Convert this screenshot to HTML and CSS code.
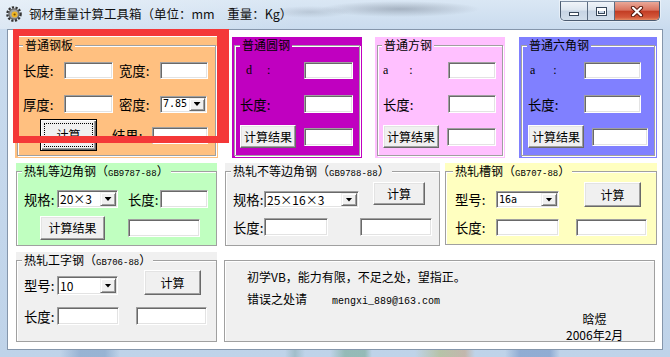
FILE: index.html
```html
<!DOCTYPE html>
<html lang="zh-CN">
<head>
<meta charset="utf-8">
<title>钢材重量计算工具箱</title>
<link rel="stylesheet" href="styles.css">
</head>
<body>
<div class="window">
  <div class="titlebar">
    <svg class="appicon" viewBox="0 0 16 16" aria-hidden="true">
      <circle cx="8" cy="8" r="6.6" fill="none" stroke="#333" stroke-width="2.4" stroke-dasharray="2.2 1.4"/>
      <circle cx="8" cy="8" r="5.7" fill="#666"/>
      <circle cx="8" cy="8" r="4.5" fill="#a3a3a3"/>
      <circle cx="8.6" cy="8.5" r="3" fill="#f0b626"/>
      <circle cx="8.6" cy="8.5" r="1.1" fill="#7a5200"/>
    </svg>
    <div class="title">钢材重量计算工具箱（单位：mm　重量：Kg）</div>
    <div class="capbtns">
      <div class="cb cb-min"><span class="glyph-min"></span></div>
      <div class="cb cb-max"><span class="glyph-max"></span></div>
      <div class="cb cb-close">
        <svg width="14" height="11" viewBox="0 0 14 11" aria-hidden="true">
          <path d="M3 1.8 L11 9.2 M11 1.8 L3 9.2" stroke="#5a1c10" stroke-width="4.2" stroke-linecap="round"/>
          <path d="M3 1.8 L11 9.2 M11 1.8 L3 9.2" stroke="#fff" stroke-width="2.2" stroke-linecap="round"/>
        </svg>
      </div>
    </div>
  </div>

  <div class="client">
    <div class="row row1">
      <div class="group inset plate">
        <div class="frame">
          <div class="cap">普通钢板</div>
          <div class="ln mt9 h17">
            <span class="lbl ml5 w41">长度:</span><span class="tb w49 h17"></span>
            <span class="lbl ml6 w41">宽度:</span><span class="tb w48 h17"></span>
          </div>
          <div class="ln mt16 h18">
            <span class="lbl ml5 w41">厚度:</span><span class="tb w49 h18"></span>
            <span class="lbl ml6 w41">密度:</span>
            <span class="combo w47 h17"><span class="val mono">7.85</span><span class="drop"></span></span>
          </div>
          <div class="ln mt6 h32">
            <span class="btn dflt ml22 w57 h32"><span class="focus">计算</span></span>
            <span class="lbl ml15 w40">结果:</span><span class="tb w56 h17"></span>
          </div>
        </div>
      </div>

      <div class="group inset round">
        <div class="frame">
          <div class="cap">普通圆钢</div>
          <div class="ln mt9 h17">
            <span class="lbl latin ml11 w58">d     :</span><span class="tb w49 h17"></span>
          </div>
          <div class="ln mt16 h18">
            <span class="lbl ml5 w64">长度:</span><span class="tb w49 h18"></span>
          </div>
          <div class="ln mt12 h23">
            <span class="btn ml5 w56 h23">计算结果</span><span class="tb ml8 w49 h18"></span>
          </div>
        </div>
      </div>

      <div class="group inset square">
        <div class="frame">
          <div class="cap">普通方钢</div>
          <div class="ln mt9 h17">
            <span class="lbl latin ml5 w65">a       :</span><span class="tb w48 h17"></span>
          </div>
          <div class="ln mt16 h18">
            <span class="lbl ml5 w65">长度:</span><span class="tb w48 h18"></span>
          </div>
          <div class="ln mt12 h23">
            <span class="btn ml5 w56 h23">计算结果</span><span class="tb ml8 w49 h18"></span>
          </div>
        </div>
      </div>

      <div class="group inset hex">
        <div class="frame">
          <div class="cap">普通六角钢</div>
          <div class="ln mt9 h17">
            <span class="lbl latin ml8 w54">a      :</span><span class="tb w57 h17"></span>
          </div>
          <div class="ln mt16 h18">
            <span class="lbl ml6 w56">长度:</span><span class="tb w57 h18"></span>
          </div>
          <div class="ln mt12 h23">
            <span class="btn ml6 w56 h23">计算结果</span><span class="tb ml8 w56 h18"></span>
          </div>
        </div>
      </div>
    </div>

    <div class="row row2">
      <div class="group angle">
        <div class="frame">
          <div class="cap">热轧等边角钢（<span class="code">GB9787-88</span>）</div>
          <div class="ln mt11 h18">
            <span class="lbl ml7 w33">规格:</span>
            <span class="combo w61 h18"><span class="val">20×3</span><span class="drop"></span></span>
            <span class="lbl ml10 w32">长度:</span><span class="tb w48 h18"></span>
          </div>
          <div class="ln mt8 h24">
            <span class="btn ml23 w65 h24">计算结果</span><span class="tb ml23 w72 h18"></span>
          </div>
        </div>
      </div>

      <div class="group uangle">
        <div class="frame">
          <div class="cap">热轧不等边角钢（<span class="code">GB9788-88</span>）</div>
          <div class="ln top mt3 h26">
            <span class="lbl ml7 w31 mt9 h17">规格:</span>
            <span class="combo w95 h17 mt9"><span class="val">25×16×3</span><span class="drop"></span></span>
            <span class="btn ml14 w52 h23">计算</span>
          </div>
          <div class="ln mt10 h18">
            <span class="lbl ml7 w31">长度:</span><span class="tb w64 h18"></span>
            <span class="tb ml32 w72 h18"></span>
          </div>
        </div>
      </div>

      <div class="group channel">
        <div class="frame">
          <div class="cap">热轧槽钢（<span class="code">GB707-88</span>）</div>
          <div class="ln top mt3 h26">
            <span class="lbl ml9 w41 mt9 h17">型号:</span>
            <span class="combo w63 h17 mt9"><span class="val mono">16a</span><span class="drop"></span></span>
            <span class="btn ml25 w57 h25">计算</span>
          </div>
          <div class="ln mt11 h17">
            <span class="lbl ml9 w41">长度:</span><span class="tb w63 h17"></span>
            <span class="tb ml17 w71 h17"></span>
          </div>
        </div>
      </div>
    </div>

    <div class="row row3">
      <div class="group ibeam">
        <div class="frame">
          <div class="cap">热轧工字钢（<span class="code">GB706-88</span>）</div>
          <div class="ln top mt2 h25">
            <span class="lbl ml7 w33 mt6 h19">型号:</span>
            <span class="combo w61 h19 mt6"><span class="val">10</span><span class="drop"></span></span>
            <span class="btn ml26 w57 h25">计算</span>
          </div>
          <div class="ln mt12 h18">
            <span class="lbl ml7 w33">长度:</span><span class="tb w62 h18"></span>
            <span class="tb ml17 w71 h18"></span>
          </div>
        </div>
      </div>

      <div class="note">
        <div>初学VB，能力有限，不足之处，望指正。</div>
        <div class="note-l2"><span>错误之处请</span><span class="mail">mengxi_889@163.com</span></div>
        <div class="sig">
          <div>晗煜</div>
          <div>2006年2月</div>
        </div>
      </div>
    </div>

    <div class="highlight"></div>
  </div>
  <div class="frame-bottom"></div>
</div>
</body>
</html>
```

FILE: styles.css
```css
* { box-sizing: border-box; }
html, body { margin: 0; padding: 0; }
body {
  width: 670px;
  height: 357px;
  overflow: hidden;
  font-family: "Noto Sans CJK SC", "Noto Sans", sans-serif;
  color: #000;
  background: #c3d6ea;
}

.window {
  width: 670px;
  height: 357px;
  display: flex;
  flex-direction: column;
  background: linear-gradient(180deg, #dae7f4 0, #c9dbee 30px, #bfd3e9 100%);
}

/* ---------- title bar ---------- */
.titlebar {
  flex: none;
  height: 29px;
  display: flex;
  align-items: flex-start;
  padding-left: 6px;
  background:
    radial-gradient(ellipse 80px 8px at 400px 9px, rgba(70, 80, 95, .33), rgba(70, 80, 95, 0) 100%),
    radial-gradient(ellipse 40px 6px at 310px 12px, rgba(70, 80, 95, .18), rgba(70, 80, 95, 0) 100%),
    linear-gradient(90deg, rgba(255, 255, 255, .35), rgba(255, 255, 255, 0) 45%);
}
.appicon { flex: none; width: 16px; height: 16px; margin-top: 6px; }
.title {
  margin-left: 7px;
  margin-top: 5px;
  font-size: 12.5px;
  line-height: 17px;
  color: #111;
  white-space: nowrap;
}
.capbtns {
  margin-left: auto;
  margin-right: 10px;
  margin-top: 1px;
  display: flex;
  height: 20px;
  border: 1px solid #4b5b70;
  border-top-color: #7e8ea3;
  border-radius: 0 0 5px 5px;
  overflow: hidden;
  box-shadow: 0 0 0 1px rgba(255, 255, 255, .45);
}
.cb { display: flex; align-items: center; justify-content: center; height: 100%; }
.cb-min, .cb-max {
  width: 27px;
  border-right: 1px solid #5b6b80;
  background: linear-gradient(180deg, #f0f4f9 0, #dde6f0 45%, #c7d4e4 50%, #d2deeb 100%);
}
.cb-close {
  width: 44px;
  background: linear-gradient(180deg, #eaa898 0, #d9735f 45%, #c33d24 52%, #d4583b 85%, #e38a63 100%);
}
.glyph-min {
  width: 10px;
  height: 4px;
  margin-top: 6px;
  background: #fff;
  border: 1px solid #38475a;
}
.glyph-max {
  width: 11px;
  height: 9px;
  border: 1px solid #38475a;
  box-shadow: inset 0 0 0 1px #fff, inset 0 2px 0 1px #fff, inset 0 0 0 2px #38475a;
}

/* ---------- client area ---------- */
.client {
  position: relative;
  flex: none;
  height: 321px;
  margin: 0 7px;
  border: 1px solid #8596ab;
  background: #fff;
  padding-top: 7px;
  display: flex;
  flex-direction: column;
}
.row { flex: none; display: flex; align-items: flex-start; }
.row1 { height: 121px; }
.row2 { height: 83px; margin-top: 5px; }
.row3 { height: 90px; margin-top: 6px; }

.group {
  flex: none;
  height: 100%;
  display: flex;
  flex-direction: column;
  background: var(--bg);
}
.inset { padding: 0 2px 2px; }

.plate   { --bg: #ffc080; margin-left: 7px;  width: 203px; }
.round   { --bg: #c000c0; margin-left: 14px; width: 130px; }
.square  { --bg: #ffc0ff; margin-left: 13px; width: 130px; }
.hex     { --bg: #8080ff; margin-left: 14px; width: 138px; }
.angle   { --bg: #c0ffc0; margin-left: 8px;  width: 201px; }
.uangle  { --bg: #f0f0f0; margin-left: 8px;  width: 215px; }
.channel { --bg: #ffffc0; margin-left: 5px;  width: 212px; height: 82px; }
.ibeam   { --bg: #f0f0f0; margin-left: 8px;  width: 201px; }

.frame {
  flex: 1;
  min-height: 0;
  margin-top: 8px;
  border: 1px solid #a0a0a0;
  box-shadow: inset 1px 1px 0 #fff, 1px 1px 0 #fff;
  display: flex;
  flex-direction: column;
}
.cap {
  align-self: flex-start;
  margin: -9px 0 0 5px;
  padding: 0 2px;
  height: 16px;
  line-height: 16px;
  font-size: 12px;
  white-space: nowrap;
  background: var(--bg);
}
.square .cap { margin-left: 4px; }
.channel .cap { margin-left: 7px; }
.code { font-family: "Liberation Mono", monospace; font-size: 9px; }

.ln { flex: none; display: flex; align-items: center; }
.ln.top { align-items: flex-start; }

.ml5 { margin-left: 5px; }   .ml6 { margin-left: 6px; }   .ml7 { margin-left: 7px; }
.ml8 { margin-left: 8px; }   .ml9 { margin-left: 9px; }   .ml10 { margin-left: 10px; }
.ml11 { margin-left: 11px; } .ml14 { margin-left: 14px; } .ml15 { margin-left: 15px; }
.ml17 { margin-left: 17px; } .ml22 { margin-left: 22px; } .ml23 { margin-left: 23px; }
.ml25 { margin-left: 25px; } .ml26 { margin-left: 26px; } .ml32 { margin-left: 32px; }

.mt2 { margin-top: 2px; }   .mt3 { margin-top: 3px; }   .mt6 { margin-top: 6px; }
.mt8 { margin-top: 8px; }   .mt9 { margin-top: 9px; }   .mt10 { margin-top: 10px; }
.mt11 { margin-top: 11px; } .mt12 { margin-top: 12px; } .mt16 { margin-top: 16px; }

.w31 { width: 31px; } .w32 { width: 32px; } .w33 { width: 33px; } .w40 { width: 40px; }
.w41 { width: 41px; } .w47 { width: 47px; } .w48 { width: 48px; } .w49 { width: 49px; }
.w52 { width: 52px; } .w54 { width: 54px; } .w56 { width: 56px; } .w57 { width: 57px; }
.w58 { width: 58px; } .w61 { width: 61px; } .w62 { width: 62px; } .w63 { width: 63px; }
.w64 { width: 64px; } .w65 { width: 65px; } .w71 { width: 71px; } .w72 { width: 72px; }
.w95 { width: 95px; }

.h17 { height: 17px; } .h18 { height: 18px; } .h19 { height: 19px; } .h23 { height: 23px; }
.h24 { height: 24px; } .h25 { height: 25px; } .h26 { height: 26px; } .h32 { height: 32px; }

.lbl {
  flex: none;
  font-size: 13.33px;
  line-height: 17px;
  white-space: nowrap;
}
.lbl.h19 { line-height: 19px; }
.latin {
  font-family: "Liberation Serif", serif;
  font-size: 12px;
  white-space: pre;
}

.tb {
  flex: none;
  background: #fff;
  border: 1px solid;
  border-color: #a0a0a0 #fff #fff #a0a0a0;
  box-shadow: inset 1px 1px 0 #696969, inset -1px -1px 0 #e3e3e3;
}

.btn {
  flex: none;
  display: flex;
  align-items: center;
  justify-content: center;
  background: #f0f0f0;
  border: 1px solid;
  border-color: #fff #696969 #696969 #fff;
  box-shadow: inset -1px -1px 0 #a0a0a0, inset 1px 1px 0 #e3e3e3;
  font-size: 12px;
  line-height: 14px;
  white-space: nowrap;
}
.btn.dflt {
  border-color: #000;
  box-shadow: inset 1px 1px 0 #fff, inset -1px -1px 0 #696969, inset -2px -2px 0 #a0a0a0;
  padding: 3px;
  align-items: stretch;
}
.focus {
  flex: 1;
  display: flex;
  align-items: center;
  justify-content: center;
  border: 1px dotted #000;
}

.combo {
  flex: none;
  display: flex;
  padding: 1px;
  background: #fff;
  border: 1px solid;
  border-color: #a0a0a0 #fff #fff #a0a0a0;
  box-shadow: inset 1px 1px 0 #696969, inset -1px -1px 0 #e3e3e3;
}
.val {
  flex: 1;
  display: flex;
  align-items: center;
  padding-left: 1px;
  font-size: 12px;
  line-height: 14px;
  white-space: nowrap;
}
.mono { font-family: "DejaVu Sans Mono", monospace; font-size: 10px; }
.drop {
  flex: none;
  width: 16px;
  display: flex;
  align-items: center;
  justify-content: center;
  background: #f0f0f0;
  border: 1px solid;
  border-color: #f0f0f0 #696969 #696969 #f0f0f0;
  box-shadow: inset 1px 1px 0 #fff, inset -1px -1px 0 #a0a0a0;
}
.drop::after {
  content: "";
  width: 7px;
  height: 4px;
  background: #000;
  clip-path: polygon(0 0, 100% 0, 50% 100%);
}

/* ---------- note box ---------- */
.note {
  flex: none;
  width: 431px;
  height: 82px;
  margin: 8px 0 0 7px;
  border: 1px solid #a0a0a0;
  box-shadow: inset 1px 1px 0 #fff, 1px 1px 0 #fff;
  background: #f0f0f0;
  padding: 8px 0 0 22px;
  font-size: 12px;
  line-height: 16px;
  white-space: nowrap;
}
.note-l2 { margin-top: 6px; display: flex; align-items: baseline; }
.mail { margin-left: 25px; font-family: "Liberation Mono", monospace; font-size: 10px; }
.sig { margin: 1px 0 0 319px; width: 57px; text-align: center; }

/* ---------- annotation overlay ---------- */
.highlight {
  position: absolute;
  left: 5px;
  top: -1px;
  width: 216px;
  height: 114px;
  border-style: solid;
  border-color: #f43838;
  border-width: 7px 12px 7px 6px;
  pointer-events: none;
}

.frame-bottom {
  flex: 1;
  background: linear-gradient(90deg,
    rgba(255,255,255,0) 0, rgba(255,255,255,0) 60px,
    rgba(80,120,170,.35) 80px, rgba(80,120,170,.35) 105px, rgba(255,255,255,0) 120px,
    rgba(255,255,255,0) 285px, rgba(90,140,130,.3) 295px, rgba(255,255,255,0) 305px,
    rgba(255,255,255,0) 330px, rgba(70,140,90,.35) 345px, rgba(70,140,90,.35) 365px, rgba(255,255,255,0) 372px,
    rgba(255,255,255,0) 415px, rgba(170,170,70,.4) 440px, rgba(200,130,60,.35) 465px, rgba(255,255,255,0) 475px,
    rgba(255,255,255,0) 505px, rgba(60,100,170,.35) 520px, rgba(60,100,170,.35) 550px, rgba(255,255,255,0) 560px);
}
```
